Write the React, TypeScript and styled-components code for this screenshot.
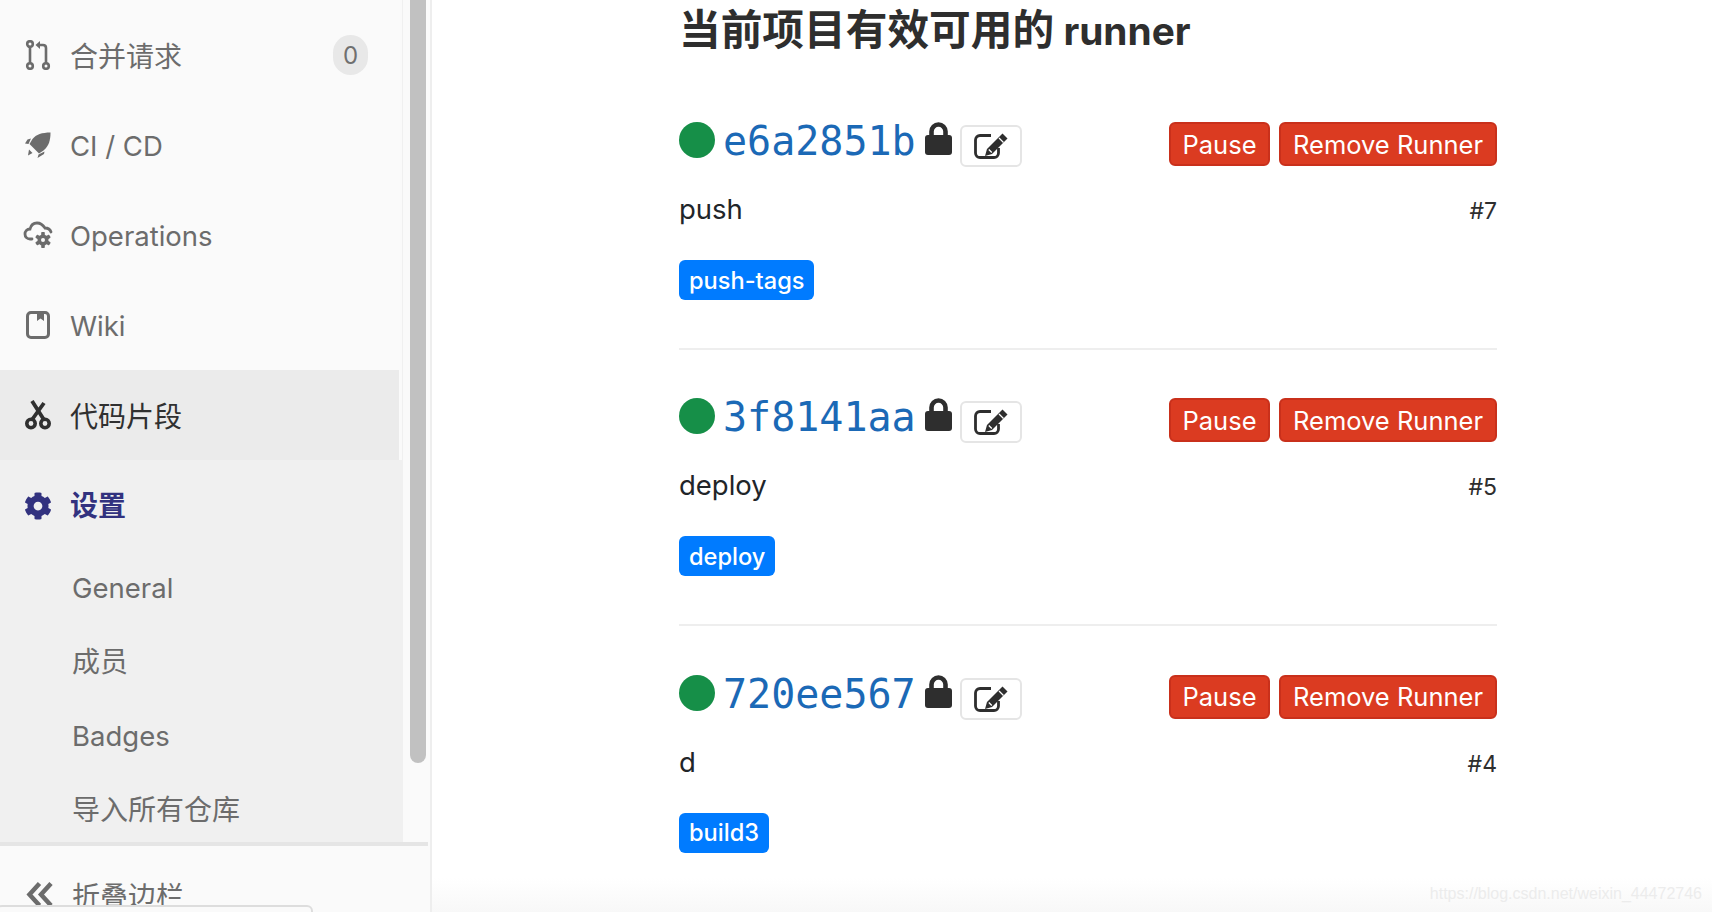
import React from "react";
import styled, { createGlobalStyle } from "styled-components";
import { FaCog } from "react-icons/fa";

const Global = createGlobalStyle`
  html, body { margin: 0; padding: 0; background: #fff; overflow: hidden; }
  body { font-family: Inter, "Noto Sans CJK SC", "Liberation Sans", sans-serif; }
`;

const Page = styled.div`
  display: flex;
  width: 1712px;
  height: 912px;
  overflow: hidden;
  position: relative;
  background: #fff;
`;

const Sidebar = styled.aside`
  width: 432px;
  flex: none;
  height: 912px;
  display: flex;
  flex-direction: column;
  box-sizing: border-box;
  background: #fafafa;
  border-right: 2px solid #eeeeee;
  position: relative;
  overflow: hidden;
`;

const Upper = styled.div`
  display: flex;
  height: 842px;
  flex: none;
`;

const Nav = styled.nav`
  width: 403px;
  flex: none;
  padding-top: 10px;
  box-sizing: border-box;
  overflow: hidden;
  border-right: 1px solid #f0f0f0;
`;

const Item = styled.div<{ $active?: boolean }>`
  display: flex;
  align-items: center;
  height: 90px;
  box-sizing: border-box;
  padding-left: 23px;
  margin-right: ${(p) => (p.$active ? "3px" : "0")};
  background: ${(p) => (p.$active ? "#ebebeb" : "transparent")};
  color: ${(p) => (p.$active ? "#303030" : "#6c6c6c")};
  font-size: 27.5px;
`;

const IconSlot = styled.span`
  width: 30px;
  height: 30px;
  flex: none;
  margin-right: 17px;
  display: flex;
  align-items: center;
  justify-content: center;
`;

/* Latin label sits a pixel lower than the flex centre in the reference. */
const Latin = styled.span`
  margin-top: 2px;
`;

/* Chinese runs are a touch larger than the Latin ones beside them. */
const Cjk = styled.span<{ $lift?: number }>`
  font-size: 28px;
  margin-bottom: ${(p) => p.$lift ?? 0}px;
`;

const Count = styled.span`
  margin-left: auto;
  margin-right: 34px;
  width: 35px;
  height: 40px;
  border-radius: 20px;
  background: #e8e8e8;
  color: #707070;
  font-size: 24px;
  display: flex;
  align-items: center;
  justify-content: center;
`;

const SettingsPanel = styled.div`
  background: #f0f0f0;
`;

const SettingsHead = styled.div`
  display: flex;
  align-items: center;
  height: 91px;
  padding-left: 23px;
  color: #32327f;
  font-size: 27.5px;
  font-weight: 700;
`;

const SubItem = styled.div`
  height: 74px;
  display: flex;
  align-items: center;
  padding-left: 72px;
  color: #6c6c6c;
  font-size: 27.5px;
`;

const ScrollTrack = styled.div`
  flex: 1;
  padding: 0 4px 0 7px;
`;

const ScrollThumb = styled.div`
  width: 16px;
  height: 763px;
  background: #c1c1c1;
  border-radius: 0 0 8px 8px;
`;

const Collapse = styled.div`
  flex: 1;
  display: flex;
  align-items: flex-start;
  border-top: 4px solid #e5e5e5;
  margin-right: 2px;
  padding: 29px 0 0 26px;
  color: #6c6c6c;
  font-size: 27.5px;
`;

const CollapseIcon = styled.span`
  width: 30px;
  height: 40px;
  margin-right: 16px;
  display: flex;
  align-items: center;
`;

const Tooltip = styled.div`
  position: absolute;
  left: -4px;
  top: 905px;
  width: 317px;
  height: 20px;
  background: #fafafa;
  border: 2px solid #dddddd;
  border-radius: 6px;
  box-sizing: border-box;
`;

const Main = styled.main`
  flex: 1;
  padding-left: 247px;
  box-sizing: border-box;
`;

const Content = styled.div`
  width: 818px;
`;

const Title = styled.h3`
  margin: 0;
  height: 74px;
  padding-top: 5px;
  box-sizing: border-box;
  font-size: 38.8px;
  line-height: 50px;
  font-weight: 700;
  color: #2e2e2e;
`;

const TitleCjk = styled.span`
  font-size: 41.7px;
`;

const Runner = styled.section<{ $last?: boolean }>`
  padding: ${(p) => (p.$last ? "48.5px" : "48px")} 0 48px;
  border-bottom: 2px solid ${(p) => (p.$last ? "transparent" : "#eeeeee")};
`;

const RunnerHead = styled.div`
  display: flex;
  align-items: flex-start;
  height: 44px;
`;

const Dot = styled.span`
  width: 36px;
  height: 36px;
  border-radius: 50%;
  background: #168f48;
  flex: none;
`;

const RunnerId = styled.a`
  margin: -1px 1px 0 8px;
  font-family: "DejaVu Sans Mono", "Liberation Mono", monospace;
  font-size: 40px;
  line-height: 40px;
  color: #1b69b6;
`;

const LockWrap = styled.span`
  margin-left: 8px;
  display: flex;
`;

const EditButton = styled.span`
  margin: 3px 0 0 8px;
  width: 62px;
  height: 42px;
  box-sizing: border-box;
  border: 2px solid #e5e5e5;
  border-radius: 6px;
  background: #fff;
  display: flex;
  align-items: center;
  justify-content: center;
`;

const Actions = styled.div`
  margin-left: auto;
  display: flex;
  gap: 9px;
`;

const Danger = styled.button<{ $w: number }>`
  width: ${(p) => p.$w}px;
  height: 44px;
  padding: 0;
  box-sizing: border-box;
  border: 2px solid #c9301b;
  border-radius: 6px;
  background: #db3b21;
  color: #fff;
  font-family: inherit;
  font-size: 25.5px;
`;

const DescRow = styled.div`
  margin-top: 21px;
  height: 44px;
  display: flex;
  align-items: center;
  justify-content: space-between;
`;

const Desc = styled.span`
  font-size: 27.5px;
  color: #212529;
`;

const RunnerNo = styled.span`
  font-size: 23px;
  color: #2e2e2e;
  margin-top: 4px;
`;

const Tag = styled.span`
  margin-top: 29px;
  display: inline-flex;
  align-items: center;
  height: 40px;
  padding: 0 10px;
  border-radius: 6px;
  background: #007bff;
  color: #fff;
  font-size: 23.6px;
  font-weight: 500;
  vertical-align: top;
`;

const Fade = styled.div`
  position: absolute;
  left: 432px;
  right: 0;
  bottom: 0;
  height: 34px;
  background: linear-gradient(#ffffff, #f8f8f8);
  display: flex;
  justify-content: flex-end;
  padding: 0 10px 0 0;
  color: #ececec;
  font-family: "Liberation Sans", sans-serif;
  font-size: 16px;
  line-height: 32px;
`;

const MergeIcon = () => (
  <svg width="26" height="30" viewBox="0 0 26 30" fill="none" stroke="#6c6c6c" strokeWidth="2.6">
    <circle cx="5" cy="4" r="2.8" />
    <circle cx="5" cy="26" r="2.8" />
    <circle cx="21" cy="26" r="2.8" />
    <path d="M5 7v16M21 23V8c0-2-1-3-3-3h-4" />
    <path d="M15 1l-4.5 4 4.5 4z" fill="#6c6c6c" stroke="none" />
  </svg>
);

const RocketIcon = () => (
  <svg width="26" height="26" viewBox="0 0 26 26" fill="#6c6c6c">
    <path d="M25.500.5C17 .5 11 2.500 7.500 7L4.500 12 14 21.500l4.500-3C24 14 25.500 8 25.500.5z" />
    <path d="M6 6.500 2.500 7.500 0 11.500l3.500.5zM19.500 19.500l-.5 2.500-6.500 4 1-3.500zM4 17.500l3.500 3.500-4.500 2.500z" />
  </svg>
);

const CloudGearIcon = () => (
  <svg width="30" height="30" viewBox="0 0 30 30" fill="none">
    <path d="M9 19H7c-3 0-5-2-5-5s2-5 5-5c1-4 4-6 7-6s6 2 8 5c3 0 5 1 6 4" stroke="#6c6c6c" strokeWidth="2.8" strokeLinecap="round" />
    <g transform="translate(20 20)" fill="#6c6c6c">
      <circle r="5.500" />
      {[0, 60, 120, 180, 240, 300].map((a) => (
        <rect key={a} x="-1.800" y="-8" width="3.600" height="4" rx="0.8" transform={`rotate(${a})`} />
      ))}
      <circle r="2" fill="#fafafa" />
    </g>
  </svg>
);

const BookIcon = () => (
  <svg width="26" height="30" viewBox="0 0 26 30" fill="none">
    <rect x="2.500" y="2.500" width="21" height="25" rx="3.500" stroke="#6c6c6c" strokeWidth="3" />
    <path d="M12 2h7v9l-3.500-2.500L12 11z" fill="#6c6c6c" />
  </svg>
);

const ScissorsIcon = () => (
  <svg width="28" height="30" viewBox="0 0 28 30" fill="none" stroke="#303030">
    <circle cx="7" cy="23.500" r="4.200" strokeWidth="3.600" />
    <circle cx="21" cy="23.500" r="4.200" strokeWidth="3.600" />
    <path d="M8.500 19 20 3M19.500 19 8 1" strokeWidth="3.800" />
  </svg>
);

const ChevronsIcon = () => (
  <svg width="27" height="26" viewBox="0 0 27 26" fill="none" stroke="#6c6c6c" strokeWidth="4.500">
    <path d="M13.500 1.500 3.500 12.500l10 11M25 1.500 15 12.500l10 11" />
  </svg>
);

const LockIcon = () => (
  <svg width="27" height="33" viewBox="0 0 27 33" fill="#2e2e2e">
    <path d="M6.500 15V9.500a7 7 0 0 1 14 0V15" fill="none" stroke="#2e2e2e" strokeWidth="4.600" />
    <rect x="0" y="13" width="27" height="20" rx="3" />
  </svg>
);

const EditIcon = () => (
  <svg width="34" height="26" viewBox="0 0 34 26" fill="none">
    <path d="M17 2.500H6A4.500 4.500 0 0 0 1.500 7v13A4.500 4.500 0 0 0 6 24.500h14a4.500 4.500 0 0 0 4.500-4.500v-5" stroke="#2e2e2e" strokeWidth="2.800" />
    <path d="M28.500.5 33.500 5.500 18 21l-7 2 2-7z" fill="#2e2e2e" />
    <path d="M25 5l4.500 4.500M14.800 16.500l3 3" stroke="#fff" strokeWidth="1.300" />
  </svg>
);

const rows = [
  { id: "e6a2851b", name: "push", no: "#7", tag: "push-tags" },
  { id: "3f8141aa", name: "deploy", no: "#5", tag: "deploy" },
  { id: "720ee567", name: "d", no: "#4", tag: "build3" },
];

export default function App() {
  return (
    <Page>
      <Global />
      <Sidebar>
        <Upper>
          <Nav>
            <Item>
              <IconSlot><MergeIcon /></IconSlot><Cjk>合并请求</Cjk><Count>0</Count>
            </Item>
            <Item>
              <IconSlot><RocketIcon /></IconSlot><Latin>CI / CD</Latin>
            </Item>
            <Item>
              <IconSlot><CloudGearIcon /></IconSlot><Latin>Operations</Latin>
            </Item>
            <Item>
              <IconSlot><BookIcon /></IconSlot><Latin>Wiki</Latin>
            </Item>
            <Item $active>
              <IconSlot><ScissorsIcon /></IconSlot><Cjk>代码片段</Cjk>
            </Item>
            <SettingsPanel>
              <SettingsHead>
                <IconSlot><FaCog size={28} color="#32327f" /></IconSlot><Cjk $lift={4}>设置</Cjk>
              </SettingsHead>
              <SubItem>General</SubItem>
              <SubItem><Cjk $lift={4}>成员</Cjk></SubItem>
              <SubItem>Badges</SubItem>
              <SubItem><Cjk $lift={4}>导入所有仓库</Cjk></SubItem>
            </SettingsPanel>
          </Nav>
          <ScrollTrack><ScrollThumb /></ScrollTrack>
        </Upper>
        <Collapse>
          <CollapseIcon><ChevronsIcon /></CollapseIcon><Cjk>折叠边栏</Cjk>
        </Collapse>
        <Tooltip />
      </Sidebar>
      <Main>
        <Content>
          <Title><TitleCjk>当前项目有效可用的</TitleCjk> runner</Title>
          {rows.map((r, i) => (
            <Runner key={r.id} $last={i === rows.length - 1}>
              <RunnerHead>
                <Dot />
                <RunnerId>{r.id}</RunnerId>
                <LockWrap><LockIcon /></LockWrap>
                <EditButton><EditIcon /></EditButton>
                <Actions>
                  <Danger $w={101}>Pause</Danger>
                  <Danger $w={218}>Remove Runner</Danger>
                </Actions>
              </RunnerHead>
              <DescRow>
                <Desc>{r.name}</Desc>
                <RunnerNo>{r.no}</RunnerNo>
              </DescRow>
              <Tag>{r.tag}</Tag>
            </Runner>
          ))}
        </Content>
      </Main>
      <Fade>https://blog.csdn.net/weixin_44472746</Fade>
    </Page>
  );
}
